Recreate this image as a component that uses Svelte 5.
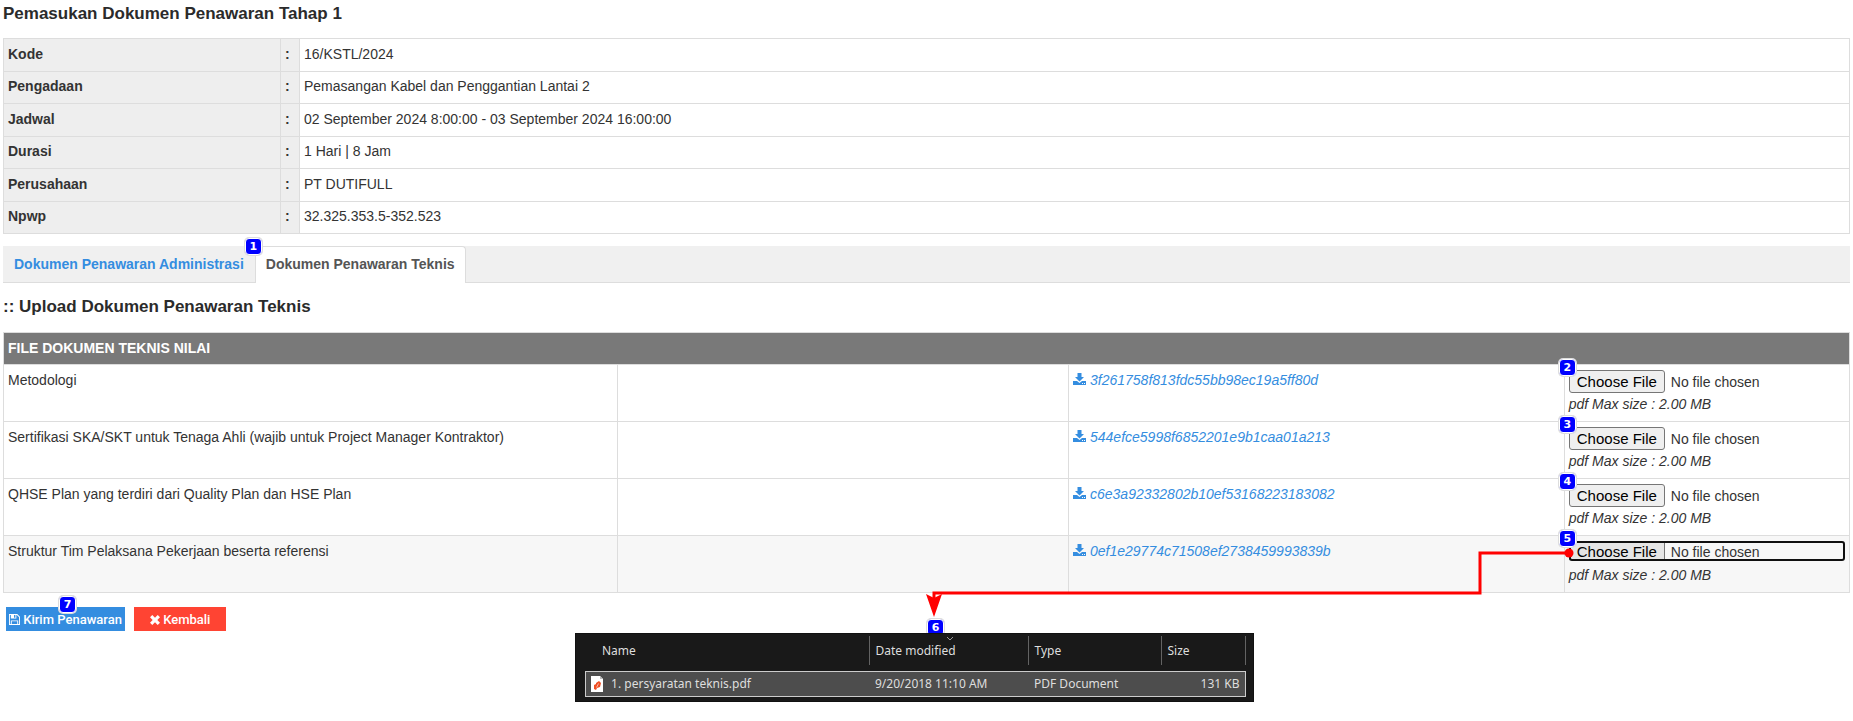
<script lang="ts">
	const details = [
		{ label: 'Kode', value: '16/KSTL/2024' },
		{ label: 'Pengadaan', value: 'Pemasangan Kabel dan Penggantian Lantai 2' },
		{ label: 'Jadwal', value: '02 September 2024 8:00:00 - 03 September 2024 16:00:00' },
		{ label: 'Durasi', value: '1 Hari | 8 Jam' },
		{ label: 'Perusahaan', value: 'PT DUTIFULL' },
		{ label: 'Npwp', value: '32.325.353.5-352.523' }
	];

	const documents = [
		{ name: 'Metodologi', file: '3f261758f813fdc55bb98ec19a5ff80d', step: 2 },
		{
			name: 'Sertifikasi SKA/SKT untuk Tenaga Ahli (wajib untuk Project Manager Kontraktor)',
			file: '544efce5998f6852201e9b1caa01a213',
			step: 3
		},
		{
			name: 'QHSE Plan yang terdiri dari Quality Plan dan HSE Plan',
			file: 'c6e3a92332802b10ef53168223183082',
			step: 4
		},
		{
			name: 'Struktur Tim Pelaksana Pekerjaan beserta referensi',
			file: '0ef1e29774c71508ef2738459993839b',
			step: 5
		}
	];
	const active_step = 5;
</script>

<main>
	<h1>Pemasukan Dokumen Penawaran Tahap 1</h1>

	<table class="details">
		<tbody>
			{#each details as row}
				<tr>
					<th scope="row">{row.label}</th>
					<td class="colon">:</td>
					<td>{row.value}</td>
				</tr>
			{/each}
		</tbody>
	</table>

	<nav class="tabs">
		<a href="#administrasi">Dokumen Penawaran Administrasi</a>
		<a href="#teknis" class="active">
			Dokumen Penawaran Teknis
			<span class="badge badge-tab">1</span>
		</a>
	</nav>

	<h2>:: Upload Dokumen Penawaran Teknis</h2>

	<table class="documents">
		<colgroup>
			<col class="col-name" />
			<col class="col-value" />
			<col class="col-file" />
			<col />
		</colgroup>
		<thead>
			<tr>
				<th colspan="4">FILE DOKUMEN TEKNIS NILAI</th>
			</tr>
		</thead>
		<tbody>
			{#each documents as doc}
				<tr class:current={doc.step == active_step}>
					<td><label for="file-{doc.step}">{doc.name}</label></td>
					<td></td>
					<td>
						<a href="#{doc.file}" class="download">
							<svg viewBox="0 0 13 12" width="13" height="12" aria-hidden="true">
								<path d="M4.500 0h4v4H11L6.500 8.500 2 4h2.500z" />
								<path
									fill-rule="evenodd"
									d="M0 8h4l2.500 2L9 8h4v4H0zM9 10v1h1v-1zM11 10v1h1v-1z"
								/>
							</svg>
							{doc.file}
						</a>
					</td>
					<td>
						<div class="upload">
							<input type="file" id="file-{doc.step}" class:focused={doc.step == active_step} />
							<span class="badge badge-file">{doc.step}</span>
						</div>
						<div class="hint">pdf Max size : 2.00 MB</div>
					</td>
				</tr>
			{/each}
		</tbody>
	</table>

	<div class="actions">
		<button class="send">
			<svg viewBox="0 0 12 12" width="11" height="11" aria-hidden="true">
				<path
					fill-rule="evenodd"
					d="M0 0h9l3 3v9H0zM1 1v10h1V7h8v4h1V3.500L8.500 1H8v4H2V1zM5.500 1v3H7V1zM3 8v3h6V8z"
				/>
			</svg>
			Kirim Penawaran
			<span class="badge badge-send">7</span>
		</button>
		<button class="back">
			<svg viewBox="0 0 10 10" width="10" height="10" aria-hidden="true">
				<path d="M2.300 0 5 2.700 7.700 0 10 2.300 7.300 5 10 7.700 7.700 10 5 7.300 2.300 10 0 7.700 2.700 5 0 2.300z" />
			</svg>
			Kembali
		</button>
	</div>

	<div class="explorer">
		<span class="badge badge-explorer">6</span>
		<table>
			<colgroup>
				<col class="col-filename" />
				<col class="col-date" />
				<col class="col-type" />
				<col />
			</colgroup>
			<thead>
				<tr>
					<th>Name</th>
					<th class="sorted">
						<svg viewBox="0 0 8 5" width="8" height="5" aria-hidden="true">
							<path d="M1 1l3 3 3-3" />
						</svg>
						Date modified
					</th>
					<th>Type</th>
					<th>Size</th>
				</tr>
			</thead>
			<tbody>
				<tr class="spacer"></tr>
				<tr class="selected">
					<td>
						<svg viewBox="0 0 12 16" width="12" height="16" aria-hidden="true">
							<path fill="#fff" d="M0 0h9l3 3v13H0z" />
							<path fill="#bbb" d="M9 0v3h3z" />
							<path fill="#f04e23" d="M5 7l3-2 2 2-1 4-3 1-1 2-2-1V9l2-1z" />
							<path stroke="#fff" fill="none" d="M5.500 11.500l2-4" stroke-width=".6" />
						</svg>
						1. persyaratan teknis.pdf
					</td>
					<td>9/20/2018 11:10 AM</td>
					<td>PDF Document</td>
					<td class="size">131 KB</td>
				</tr>
			</tbody>
		</table>
	</div>

	<svg class="arrow" viewBox="0 0 648 72" width="648" height="72" aria-hidden="true">
		<path d="M643 8H554V48H8V56" />
		<circle cx="643" cy="8" r="4.500" />
		<polygon points="0,49 8,53 16,49 8,72" />
	</svg>
</main>

<style>
	:global(body) {
		margin: 0;
		background-color: #fff;
	}
	main {
		position: relative;
		padding: 0 3px 18px;
		font-family: Arial, 'Liberation Sans', sans-serif;
		font-size: 14px;
		line-height: 20px;
		color: #333;
	}
	h1,
	h2 {
		margin: 0;
		font-size: 17px;
		line-height: 24px;
		color: #2b2b2b;
	}
	h1 {
		padding: 2px 0 12px;
	}
	h2 {
		padding: 12px 0 13px;
	}
	table {
		width: 100%;
		border-collapse: collapse;
		table-layout: fixed;
	}
	th {
		text-align: left;
	}
	a {
		color: #348de0;
		text-decoration: none;
	}
	svg {
		fill: currentColor;
	}

	.details {
		height: 196px;
	}
	.details th,
	.details td {
		padding: 4px 4px 6px;
		border: 1px solid #ddd;
	}
	.details th {
		width: 268px;
		background-color: #eee;
	}
	.details .colon {
		width: 10px;
		background-color: #eee;
		font-weight: bold;
	}

	.tabs {
		display: flex;
		margin-top: 12px;
		background-color: #f0f0f0;
		border-bottom: 1px solid #ddd;
		font-weight: bold;
	}
	.tabs a {
		position: relative;
		padding: 8px 10px;
		border: 1px solid transparent;
		border-bottom: 0;
		line-height: 19px;
	}
	.tabs .active {
		margin-bottom: -1px;
		border-color: #ddd;
		border-radius: 0 4px 0 0;
		background-color: #fff;
		color: #555;
	}

	.documents th {
		padding: 5px 4px 6px;
		border: 1px solid #ddd;
		background-color: #797979;
		color: #fff;
	}
	.documents td {
		padding: 5px 4px 3px;
		height: 48px;
		border: 1px solid #ddd;
		vertical-align: top;
	}
	.documents .current td {
		background-color: #f7f7f7;
	}
	.col-name {
		width: 33.25%;
	}
	.col-value {
		width: 24.45%;
	}
	.col-file {
		width: 26.85%;
	}
	.download {
		font-style: italic;
	}
	.upload {
		display: flow-root;
		position: relative;
		height: 24px;
	}
	input {
		display: block;
		width: 100%;
		font-family: inherit;
		font-size: 14px;
		line-height: 20px;
		color: #333;
	}
	input::file-selector-button {
		margin-right: 6px;
		padding: 0 7px;
		height: 23px;
		font-size: 15px;
		border: 1px solid #767676;
		border-radius: 3px;
		background-color: #efefef;
		color: #000;
	}
	.focused {
		height: 20px;
		outline: 2px solid #101010;
		outline-offset: -2px;
		border-radius: 3px;
		overflow: hidden;
	}
	.focused::file-selector-button {
		height: 20px;
		border-width: 0 1px;
		border-radius: 0;
		background-color: #e5e5e5;
	}
	.hint {
		font-style: italic;
	}

	.actions {
		display: flex;
		gap: 9px;
		padding: 14px 3px 2px;
	}
	button {
		position: relative;
		height: 24px;
		padding: 0 3px;
		border: 0;
		font-family: Roboto, Arial, sans-serif;
		font-size: 13px;
		font-weight: 500;
		color: #fff;
	}
	.send {
		background-color: #348de0;
	}
	.back {
		padding: 0 16px;
		background-color: #ff4433;
	}
	button svg {
		vertical-align: -1px;
	}

	.badge {
		position: absolute;
		width: 15px;
		height: 15px;
		border: 1px solid #fff;
		border-radius: 4px;
		box-shadow: 0 0 0 1px #ddd;
		background-color: #00f;
		color: #fff;
		font: bold 11px/15px 'DejaVu Sans', sans-serif;
		text-align: center;
	}
	.badge-tab {
		top: -9px;
		left: -11px;
	}
	.badge-file {
		top: -11px;
		left: -10px;
	}
	.badge-send {
		top: -11px;
		left: 53px;
	}
	.badge-explorer {
		z-index: -1;
		top: -15px;
		left: 351px;
	}

	.arrow {
		position: absolute;
		top: 545px;
		right: 279px;
		fill: #f00;
	}
	.arrow path {
		fill: none;
		stroke: #f00;
		stroke-width: 3;
	}

	.explorer {
		position: relative;
		width: 661px;
		margin: 0 596px 0 auto;
		padding: 2px 7px 4px 9px;
		border: 1px solid #111;
		background-color: #191919;
		color: #dedede;
		font-family: 'Segoe UI', 'Noto Sans', sans-serif;
		font-size: 12px;
	}
	.explorer th {
		position: relative;
		height: 29px;
		padding: 0 6px;
		border-right: 1px solid #636363;
		font-weight: normal;
	}
	.explorer th:first-child {
		padding-left: 17px;
	}
	.explorer .spacer {
		height: 6px;
	}
	.selected {
		outline: 1px solid #ccc;
		outline-offset: -1px;
		background-color: #4d4d4d;
	}
	.explorer td {
		height: 26px;
		padding: 0 6px;
		white-space: nowrap;
	}
	.explorer td svg {
		margin-right: 5px;
		vertical-align: -4px;
	}
	.sorted svg {
		position: absolute;
		top: 0;
		left: 76px;
		fill: none;
		stroke: #999;
	}
	.col-filename {
		width: 284px;
	}
	.col-date {
		width: 159px;
	}
	.col-type {
		width: 133px;
	}
	.explorer .size {
		text-align: right;
	}
</style>
